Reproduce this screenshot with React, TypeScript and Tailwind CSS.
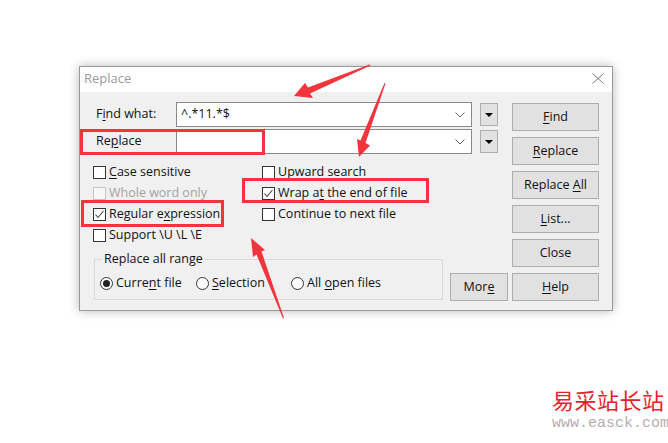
import React from "react";

const U = ({ children }: { children: React.ReactNode }) => (
  <span className="underline underline-offset-[2px] decoration-1">{children}</span>
);

function Check({ children, checked, disabled }: { children: React.ReactNode; checked?: boolean; disabled?: boolean }) {
  return (
    <div className={"flex items-center h-[21px] gap-[3px] " + (disabled ? "text-[#a3a3a3]" : "text-[#111]")}>
      <div
        className={
          "w-[13px] h-[13px] border flex items-center justify-center " +
          (disabled ? "border-[#c4c4c4] bg-[#f7f7f7]" : "border-[#333] bg-white")
        }
      >
        {checked && (
          <svg width="11" height="11" viewBox="0 0 11 11">
            <polyline points="1.5,5.5 4,8.5 9.5,2" fill="none" stroke="#444" strokeWidth="1.1" />
          </svg>
        )}
      </div>
      <span className="whitespace-pre">{children}</span>
    </div>
  );
}

function Radio({ children, checked, w }: { children: React.ReactNode; checked?: boolean; w: string }) {
  return (
    <div className={"flex items-center gap-[3px] " + w}>
      <div className="w-[13px] h-[13px] rounded-full border border-[#333] bg-white flex items-center justify-center">
        {checked && <div className="w-[7px] h-[7px] rounded-full bg-[#222]" />}
      </div>
      <span className="whitespace-pre">{children}</span>
    </div>
  );
}

function Btn({ children, w = "w-[87px]" }: { children: React.ReactNode; w?: string }) {
  return (
    <div className={"h-[28px] border border-[#adadad] bg-[#e1e1e1] flex items-center justify-center text-[#111] " + w}>
      <span className="whitespace-pre">{children}</span>
    </div>
  );
}

function Combo({ value }: { value?: string }) {
  return (
    <div className="w-[296px] h-[25px] border border-[#8a8a8a] bg-white flex items-center justify-between pl-[4px] pr-[6px]">
      <span className="text-[#111]">{value ?? ""}</span>
      <svg width="10" height="6" viewBox="0 0 10 6">
        <polyline points="0.5,0.5 5,5 9.5,0.5" fill="none" stroke="#666" strokeWidth="1" />
      </svg>
    </div>
  );
}

function DropBtn() {
  return (
    <div className="w-[18px] h-[23px] border border-[#adadad] bg-[#e1e1e1] flex items-center justify-center">
      <svg width="8" height="4" viewBox="0 0 8 4">
        <polygon points="0,0 8,0 4,4" fill="#000" />
      </svg>
    </div>
  );
}

export default function App() {
  return (
    <div className="relative w-[668px] h-[443px] bg-white overflow-hidden pt-[66px] pl-[79px] font-['Open_Sans','Noto_Sans',sans-serif] text-[12.5px] leading-none">
      <div className="w-[534px] h-[245px] border border-[#9a9a9a] flex flex-col shadow-[0_0_10px_rgba(0,0,0,0.28)]">
        <div className="h-[25px] bg-white flex items-center justify-between pl-[4px] pr-[8px] pb-[2px]">
          <span className="text-[13px] text-[#9a9a9a]">Replace</span>
          <svg width="12" height="11" viewBox="0 0 12 11">
            <line x1="0.5" y1="0.5" x2="11.5" y2="10.5" stroke="#777" strokeWidth="1" />
            <line x1="11.5" y1="0.5" x2="0.5" y2="10.5" stroke="#777" strokeWidth="1" />
          </svg>
        </div>
        <div className="flex-1 bg-[#f0f0f0] flex">
          <div className="w-[428px] pt-[10px] flex flex-col">
            <div className="flex items-center h-[25px] pl-[16px]">
              <span className="w-[80px] text-[#111]">
                F<U>i</U>nd what:
              </span>
              <Combo value="^.*11.*$" />
              <div className="ml-[8px]">
                <DropBtn />
              </div>
            </div>
            <div className="flex items-center h-[25px] pl-[16px] mt-[2px]">
              <span className="w-[80px] text-[#111]">
                Re<U>p</U>lace
              </span>
              <Combo />
              <div className="ml-[8px]">
                <DropBtn />
              </div>
            </div>
            <div className="flex pl-[13px] mt-[8px]">
              <div className="w-[169px] flex flex-col">
                <Check>
                  <U>C</U>ase sensitive
                </Check>
                <Check disabled>Whole word only</Check>
                <Check checked>
                  Regular e<U>x</U>pression
                </Check>
                <Check>Support \U \L \E</Check>
              </div>
              <div className="flex flex-col">
                <Check>
                  <U>U</U>pward search
                </Check>
                <Check checked>
                  Wrap a<U>t</U> the end of file
                </Check>
                <Check>Continue to next file</Check>
              </div>
            </div>
            <div className="flex items-end mt-[4px]">
              <fieldset className="ml-[14px] w-[349px] h-[50px] border border-[#d9d9d9] text-[#111]">
                <legend className="ml-[7px] px-[2px] h-[18px] leading-[18px]">Replace all range</legend>
                <div className="flex items-center h-[20px] pl-[5px] mt-[5px]">
                  <Radio checked w="w-[96px]">
                    Curre<U>n</U>t file
                  </Radio>
                  <Radio w="w-[95px]">
                    <U>S</U>election
                  </Radio>
                  <Radio w="w-[140px]">
                    All <U>o</U>pen files
                  </Radio>
                </div>
              </fieldset>
              <div className="ml-[7px] mb-[-1px]">
                <Btn w="w-[58px]">
                  Mor<U>e</U>
                </Btn>
              </div>
            </div>
          </div>
          <div className="ml-[4px] pt-[11px] flex flex-col gap-[6px]">
            <Btn>
              <U>F</U>ind
            </Btn>
            <Btn>
              <U>R</U>eplace
            </Btn>
            <Btn>
              Replace <U>A</U>ll
            </Btn>
            <Btn>
              <U>L</U>ist...
            </Btn>
            <Btn>Close</Btn>
            <Btn>
              <U>H</U>elp
            </Btn>
          </div>
        </div>
      </div>

      {/* red annotation boxes */}
      <div className="absolute left-[80px] top-[129px] w-[185px] h-[26px] border-[3px] border-[#f2343c]" />
      <div className="absolute left-[242px] top-[178px] w-[187px] h-[25px] border-[3px] border-[#f2343c]" />
      <div className="absolute left-[81px] top-[200px] w-[143px] h-[27px] border-[3px] border-[#f2343c]" />

      {/* arrows */}
      <svg className="absolute inset-0 pointer-events-none" width="668" height="443" viewBox="0 0 668 443">
        <polygon
          points="294,96 305,83 308,87.5 369.5,64.5 370.5,65.5 310,93.5 313,98"
          fill="#f2343c"
        />
        <polygon
          points="359,157 357,139 360.5,140.5 384.5,83 385.5,83.5 365.5,143 370,145.5"
          fill="#f2343c"
        />
        <polygon
          points="251,238 265,250 261.5,251.5 284,318 283,318.5 256.5,254.5 253,257"
          fill="#f2343c"
        />
      </svg>

      {/* watermark */}
      <div className="absolute left-[552px] top-[385px] flex flex-col">
        <span className="font-['Noto_Sans_CJK_SC',sans-serif] text-[22px] leading-[28px] tracking-[0.5px] text-[#e4222c]">
          易采站长站
        </span>
        <span className="font-['Liberation_Mono',monospace] text-[15px] leading-[18px] text-[#b8adad] mt-[2px]">
          www.easck.com
        </span>
      </div>
    </div>
  );
}
